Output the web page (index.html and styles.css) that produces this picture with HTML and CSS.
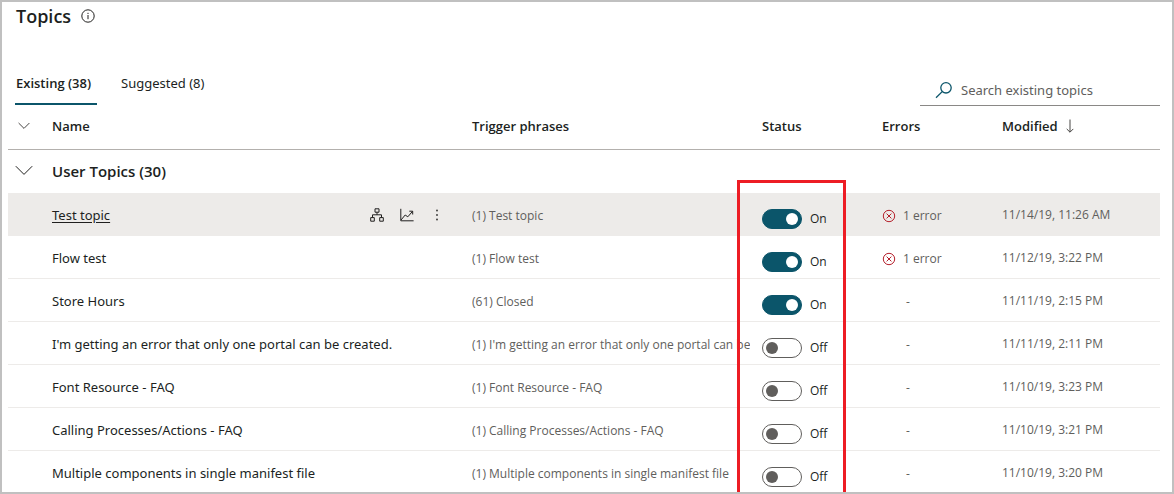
FILE: index.html
```html
<!DOCTYPE html>
<html lang="en">
<head>
<meta charset="utf-8">
<title>Topics</title>
<link rel="stylesheet" href="styles.css">
</head>
<body>
<svg class="defs" width="0" height="0" aria-hidden="true">
  <symbol id="error" viewBox="0 0 14 14"><circle cx="7" cy="7" r="5.7"/><path d="M4.6 4.6l4.8 4.8M9.4 4.6L4.6 9.4"/></symbol>
</svg>
<main class="page">
  <header class="title-bar">
    <h1 class="title">Topics</h1>
    <button class="icon-button" type="button" aria-label="About topics">
      <svg class="icon icon-dark" width="14" height="14" viewBox="0 0 14 14"><circle cx="7" cy="7" r="6.2"/><path d="M7 6v4.2M7 3.8v1.2"/></svg>
    </button>
  </header>

  <div class="toolbar">
    <nav class="tabs">
      <button class="tab tab-active" type="button">Existing (38)</button>
      <button class="tab" type="button">Suggested (8)</button>
    </nav>
    <label class="search">
      <svg class="icon search-icon" width="18" height="18" viewBox="0 0 18 18"><circle cx="11" cy="6.8" r="5.2"/><path d="M7.2 10.6L1 16.8"/></svg>
      <input class="search-input" type="search" placeholder="Search existing topics" aria-label="Search existing topics">
    </label>
  </div>

  <div class="list">
    <table class="topics">
      <colgroup><col class="col-toggle"><col><col class="col-trigger"><col class="col-status"><col class="col-errors"><col class="col-modified"></colgroup>
      <thead>
        <tr>
          <th><button class="icon-button chevron" type="button" aria-label="Collapse all groups"><svg class="icon" width="12" height="8" viewBox="0 0 12 8"><path d="M.6 1L6 6.4 11.4 1"/></svg></button></th>
          <th>Name</th>
          <th>Trigger phrases</th>
          <th>Status</th>
          <th>Errors</th>
          <th><button class="sort" type="button">Modified <svg class="icon" width="8" height="14" viewBox="0 0 8 14"><path d="M4 .5v12.6M.7 9.9L4 13.2l3.3-3.3"/></svg></button></th>
        </tr>
      </thead>
      <tbody>
        <tr class="group">
          <td><button class="icon-button chevron-large" type="button" aria-label="Collapse User Topics"><svg class="icon icon-dark" width="18" height="11" viewBox="0 0 18 11"><path d="M.8 1.2L9 9.4l8.2-8.2"/></svg></button></td>
          <th colspan="5" scope="rowgroup">User Topics (30)</th>
        </tr>
        <tr class="row row-hover">
          <td></td>
          <td class="name">
            <div class="name-cell">
              <a class="name-link" href="#">Test topic</a>
              <span class="actions">
                <button class="icon-button" type="button" aria-label="Open in canvas"><svg class="icon icon-dark" width="14" height="14" viewBox="0 0 14 14"><path d="M5 .8h4v3.4H5zM.7 9.6h3.6v3.6H.7zM9.7 9.6h3.6v3.6H9.7zM7 4.2v2.6M2.5 9.6V6.8h9v2.8"/></svg></button>
                <button class="icon-button" type="button" aria-label="Analytics"><svg class="icon icon-dark" width="14" height="14" viewBox="0 0 14 14"><path d="M.8.8v12h12.8M1 12l4.2-5 2.6 1.8 4.7-5.4M9.3 3.2h3.4v3.3"/></svg></button>
                <button class="icon-button" type="button" aria-label="More"><svg class="dots" width="14" height="14" viewBox="0 0 14 14"><circle cx="7" cy="2.5" r=".9"/><circle cx="7" cy="7" r=".9"/><circle cx="7" cy="11.5" r=".9"/></svg></button>
              </span>
            </div>
          </td>
          <td class="trigger"><div class="phrase">(1) Test topic</div></td>
          <td class="status"><label class="switch"><input class="switch-input" type="checkbox" role="switch" checked><span>On</span></label></td>
          <td><span class="error"><svg class="icon-error" width="14" height="14"><use href="#error"/></svg>1 error</span></td>
          <td class="modified">11/14/19, 11:26 AM</td>
        </tr>
        <tr class="row">
          <td></td><td class="name">Flow test</td><td class="trigger"><div class="phrase">(1) Flow test</div></td>
          <td class="status"><label class="switch"><input class="switch-input" type="checkbox" role="switch" checked><span>On</span></label></td>
          <td><span class="error"><svg class="icon-error" width="14" height="14"><use href="#error"/></svg>1 error</span></td>
          <td class="modified">11/12/19, 3:22 PM</td>
        </tr>
        <tr class="row">
          <td></td><td class="name">Store Hours</td><td class="trigger"><div class="phrase">(61) Closed</div></td>
          <td class="status"><label class="switch"><input class="switch-input" type="checkbox" role="switch" checked><span>On</span></label></td>
          <td class="no-error">-</td>
          <td class="modified">11/11/19, 2:15 PM</td>
        </tr>
        <tr class="row">
          <td></td><td class="name">I'm getting an error that only one portal can be created.</td><td class="trigger"><div class="phrase">(1) I'm getting an error that only one portal can be created.</div></td>
          <td class="status"><label class="switch"><input class="switch-input" type="checkbox" role="switch"><span>Off</span></label></td>
          <td class="no-error">-</td>
          <td class="modified">11/11/19, 2:11 PM</td>
        </tr>
        <tr class="row">
          <td></td><td class="name">Font Resource - FAQ</td><td class="trigger"><div class="phrase">(1) Font Resource - FAQ</div></td>
          <td class="status"><label class="switch"><input class="switch-input" type="checkbox" role="switch"><span>Off</span></label></td>
          <td class="no-error">-</td>
          <td class="modified">11/10/19, 3:23 PM</td>
        </tr>
        <tr class="row">
          <td></td><td class="name">Calling Processes/Actions - FAQ</td><td class="trigger"><div class="phrase">(1) Calling Processes/Actions - FAQ</div></td>
          <td class="status"><label class="switch"><input class="switch-input" type="checkbox" role="switch"><span>Off</span></label></td>
          <td class="no-error">-</td>
          <td class="modified">11/10/19, 3:21 PM</td>
        </tr>
        <tr class="row">
          <td></td><td class="name">Multiple components in single manifest file</td><td class="trigger"><div class="phrase">(1) Multiple components in single manifest file</div></td>
          <td class="status"><label class="switch"><input class="switch-input" type="checkbox" role="switch"><span>Off</span></label></td>
          <td class="no-error">-</td>
          <td class="modified">11/10/19, 3:20 PM</td>
        </tr>
      </tbody>
    </table>
    <div class="highlight" aria-hidden="true"></div>
  </div>
</main>
</body>
</html>
```
FILE: styles.css
```css
* { box-sizing: border-box; }

body {
  margin: 0;
  font-family: "Segoe UI", "Noto Sans", "Open Sans", sans-serif;
  font-size: 13px;
  line-height: 20px;
  color: #201f1e;
  background: #fff;
}

button, input {
  font: inherit;
  color: inherit;
}

button {
  padding: 0;
  border: 0;
  background: none;
}

.defs { position: absolute; }

.page {
  height: 100vh;
  overflow: hidden;
  padding: 0 12px 0 6px;
  border: 2px solid #c0c0c0;
}

.icon {
  display: block;
  fill: none;
  stroke: #484644;
  stroke-width: 1;
}

.icon-dark { stroke: #201f1e; }
.dots { display: block; fill: #323130; }

.title-bar {
  display: flex;
  align-items: center;
  gap: 10px;
  height: 28px;
  padding-left: 8px;
}

.title {
  margin: 0;
  font-family: "Segoe UI", "Open Sans", sans-serif;
  font-size: 18px;
  font-weight: 600;
}

.toolbar {
  display: flex;
  justify-content: space-between;
  align-items: flex-end;
  height: 76px;
  padding-left: 7px;
}

.tabs {
  display: flex;
  gap: 23px;
}

.tab {
  height: 42px;
  padding: 0 1px 1px;
  margin-bottom: 1px;
  border-bottom: 2px solid transparent;
}

.tab-active {
  padding-right: 6px;
  border-color: #0b556a;
  font-family: "Segoe UI", "Open Sans", sans-serif;
  font-weight: 600;
}

.search {
  display: flex;
  align-items: center;
  gap: 8px;
  width: 240px;
  height: 32px;
  padding-left: 15px;
  border-bottom: 1px solid #8a8886;
}

.search-icon { stroke: #0b556a; stroke-width: 1.3; }

.search-input {
  flex: 1;
  min-width: 0;
  padding: 0;
  border: 0;
  outline: 0;
  background: none;
}

.search-input::placeholder { color: #605e5c; }

.list { position: relative; }

.topics {
  width: 100%;
  table-layout: fixed;
  border-collapse: separate;
  border-spacing: 0;
}

.col-toggle { width: 44px; }
.col-trigger { width: 290px; }
.col-status, .col-errors { width: 120px; }
.col-modified { width: 158px; }

.topics th, .topics td {
  padding: 0;
  text-align: left;
  white-space: nowrap;
}

.topics th {
  font-family: "Segoe UI", "Open Sans", sans-serif;
  font-weight: 600;
}

.topics thead th {
  height: 44px;
  padding-bottom: 3px;
  border-bottom: 1px solid #b3b0ad;
}

.topics .group th, .topics .group td { height: 43px; padding-bottom: 2px; }
.topics .group th { font-size: 15px; }

.chevron { display: block; margin-left: 10px; }
.chevron-large { display: block; margin-left: 7px; }

.sort {
  display: flex;
  align-items: center;
  gap: 8px;
}

.topics .row td {
  height: 43px;
  padding-top: 4px;
  border-bottom: 1px solid #edebe9;
  color: #605e5c;
  font-family: "Segoe UI", "Open Sans", sans-serif;
  font-size: 12px;
}

.topics .row-hover td { background: #edebe9; }

.topics .row .name {
  padding-top: 2px;
  color: #201f1e;
  font-family: "Segoe UI", "Noto Sans", sans-serif;
  font-size: 13px;
}

.topics .row .modified { padding-top: 2px; }

.name-cell {
  display: flex;
  justify-content: space-between;
  padding-right: 28px;
}

.name-link {
  color: inherit;
  text-underline-offset: 2px;
}

.actions {
  display: flex;
  align-items: center;
  gap: 16px;
}

.phrase {
  overflow: hidden;
  margin-right: 12px;
}

.topics .row .status { padding-top: 10px; }

.switch {
  display: flex;
  align-items: center;
  gap: 8px;
  color: #201f1e;
}

.switch-input {
  display: flex;
  align-items: center;
  appearance: none;
  width: 40px;
  height: 20px;
  margin: 0;
  padding: 0 3px;
  border: 1px solid #605e5c;
  border-radius: 10px;
  background: #fff;
}

.switch-input::before {
  content: "";
  width: 12px;
  height: 12px;
  border-radius: 50%;
  background: #605e5c;
}

.switch-input:checked {
  justify-content: flex-end;
  border-color: #0b556a;
  background: #0b556a;
}

.switch-input:checked::before { background: #fff; }

.error {
  display: flex;
  align-items: center;
  gap: 7px;
}

.icon-error {
  fill: none;
  stroke: #b5202b;
  stroke-width: 1;
}

.topics .row .no-error { padding-left: 24px; }

/* Callout frame around the Status column */
.highlight {
  position: absolute;
  top: 74px;
  right: 314px;
  bottom: 0;
  width: 109px;
  border: 3px solid #ed1c24;
  border-bottom: 0;
  pointer-events: none;
}
```
